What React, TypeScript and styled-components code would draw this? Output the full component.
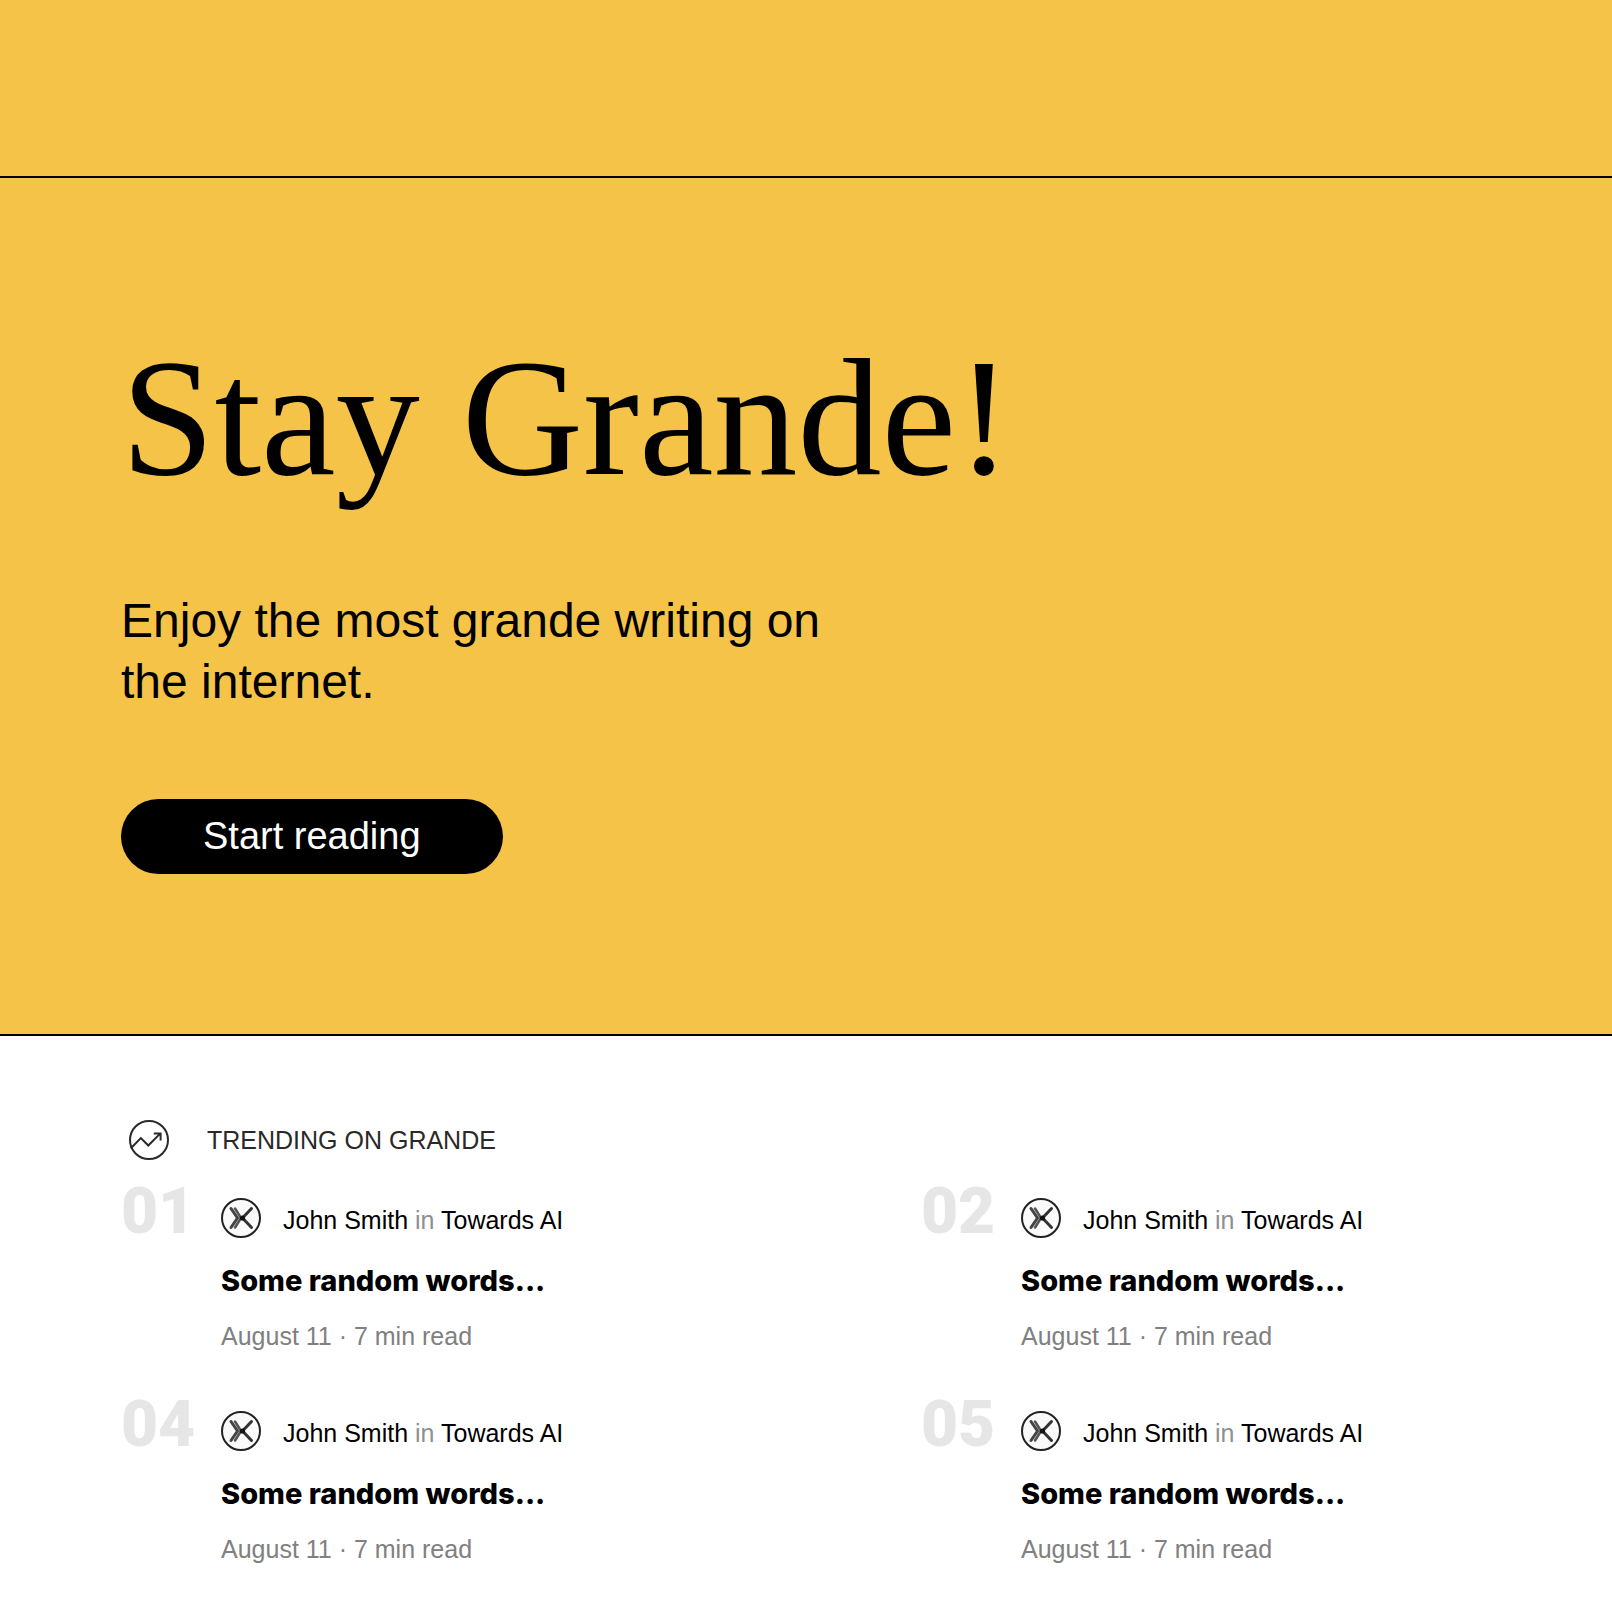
import React from "react";
import styled, { createGlobalStyle } from "styled-components";

const GlobalStyle = createGlobalStyle`
  *, *::before, *::after { box-sizing: border-box; }
  body {
    margin: 0;
    background: #fff;
    color: #000;
    font-family: "Liberation Sans", Arial, Helvetica, sans-serif;
  }
  h1, h2, h3, p, ol { margin: 0; padding: 0; }
`;

const Header = styled.header`
  height: 178px;
  background: #f5c348;
  border-bottom: 2px solid #000;
`;

const Hero = styled.section`
  display: flex;
  flex-direction: column;
  align-items: flex-start;
  padding: 155px 121px 160px;
  background: #f5c348;
  border-bottom: 2px solid #000;
`;

const HeroTitle = styled.h1`
  font-family: "Liberation Serif", "Times New Roman", serif;
  font-size: 168px;
  line-height: 168px;
  font-weight: 400;
`;

const HeroText = styled.p`
  max-width: 760px;
  margin-top: 89px;
  font-size: 48px;
  line-height: 61px;
`;

const StartButton = styled.button`
  margin-top: 87px;
  padding: 0 82px;
  border: 0;
  border-radius: 38px;
  background: #000;
  color: #fff;
  font-family: inherit;
  font-size: 38px;
  line-height: 75px;
  cursor: pointer;
`;

const Trending = styled.section`
  padding: 84px 121px 42px;
`;

const TrendingHeader = styled.div`
  display: flex;
  align-items: center;
  gap: 38px;
  padding-left: 8px;
`;

const TrendingTitle = styled.h2`
  font-size: 25px;
  line-height: 40px;
  font-weight: 400;
  color: #292929;
`;

const Posts = styled.ol`
  display: grid;
  grid-template-columns: repeat(2, minmax(0, 1fr));
  gap: 42px 230px;
  margin-top: 20px;
  list-style: none;
`;

const Post = styled.li`
  display: grid;
  grid-template-columns: 100px minmax(0, 1fr);
  align-items: start;
`;

const Rank = styled.span`
  font-family: Roboto, "Liberation Sans", sans-serif;
  font-size: 64px;
  line-height: 64px;
  font-weight: 900;
  color: #e6e6e6;
`;

const PostBody = styled.article`
  padding-top: 18px;
`;

const Byline = styled.div`
  display: flex;
  align-items: flex-end;
  gap: 22px;
  height: 40px;
`;

const Author = styled.p`
  font-size: 25px;
  line-height: 36px;
  white-space: nowrap;
`;

const Muted = styled.span`
  color: #8f8f8f;
`;

const PostTitle = styled.h3`
  margin-top: 23px;
  font-family: Inter, "Liberation Sans", sans-serif;
  font-size: 29px;
  line-height: 40px;
  font-weight: 800;
`;

const PostMeta = styled.p`
  margin-top: 20px;
  font-size: 25px;
  line-height: 30px;
  color: #808080;
`;

const Icon = styled.svg`
  flex: none;
  display: block;
  width: 40px;
  height: 40px;
`;

function TrendingIcon() {
  return (
    <Icon viewBox="4 4.8 20 20" fill="none" stroke="#292929" aria-hidden="true">
      <circle cx="14" cy="14.8" r="9.5" />
      <path d="M4.9 18.9l5.03-5.02 3.71 3.66 5.8-5.8M16.4 11.6h3.4v3.4" />
    </Icon>
  );
}

function PublicationLogo() {
  return (
    <Icon viewBox="0 0 40 40" fill="none" aria-hidden="true">
      <circle cx="20" cy="20" r="19" fill="#fafafa" stroke="#222" strokeWidth="2" />
      <g strokeLinecap="round">
        <path d="M10 10.5L16.5 20L10 29.5" stroke="#444" strokeWidth="3" />
        <path d="M14 10.5L20 20L14 29.5" stroke="#555" strokeWidth="2.6" />
        <path d="M30.5 10.5L21.5 20L30.5 29.5" stroke="#333" strokeWidth="3" />
      </g>
      <circle cx="21.5" cy="20" r="2.6" fill="#111" />
    </Icon>
  );
}

const ranks = ["01", "02", "04", "05"];

export default function App() {
  return (
    <>
      <GlobalStyle />
      <Header />
      <main>
        <Hero>
          <HeroTitle>Stay Grande!</HeroTitle>
          <HeroText>Enjoy the most grande writing on the internet.</HeroText>
          <StartButton type="button">Start reading</StartButton>
        </Hero>
        <Trending>
          <TrendingHeader>
            <TrendingIcon />
            <TrendingTitle>TRENDING ON GRANDE</TrendingTitle>
          </TrendingHeader>
          <Posts>
            {ranks.map((rank) => (
              <Post key={rank}>
                <Rank>{rank}</Rank>
                <PostBody>
                  <Byline>
                    <PublicationLogo />
                    <Author>
                      John Smith <Muted>in</Muted> Towards AI
                    </Author>
                  </Byline>
                  <PostTitle>Some random words...</PostTitle>
                  <PostMeta>August 11 · 7 min read</PostMeta>
                </PostBody>
              </Post>
            ))}
          </Posts>
        </Trending>
      </main>
    </>
  );
}
